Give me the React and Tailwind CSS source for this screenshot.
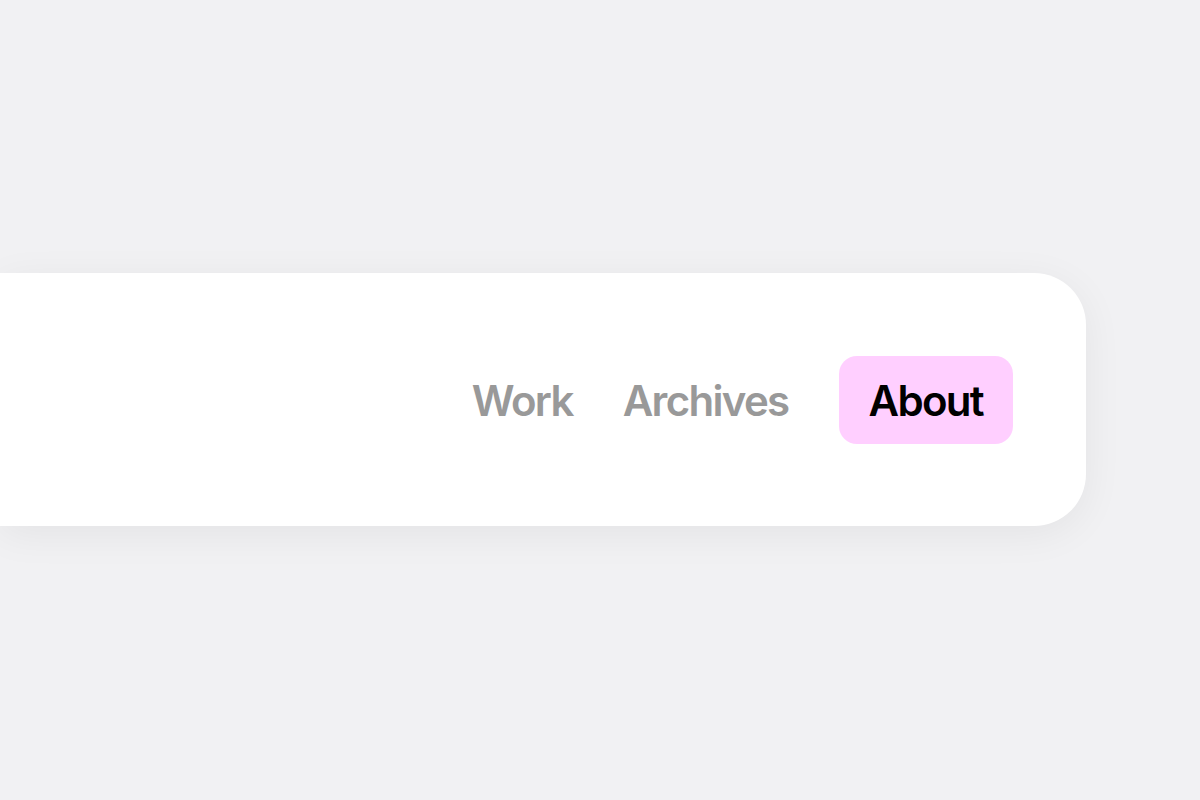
import React from 'react';

const LINKS = ['Work', 'Archives'];

export default function App() {
  return (
    <div className="min-h-screen w-full bg-[#f1f1f3] pt-[273px] overflow-hidden" style={{ fontFamily: 'Inter, "Liberation Sans", Arial, sans-serif' }}>
      <header className="w-[1086px] h-[253px] bg-white rounded-r-[52px] shadow-[0_8px_40px_rgba(0,0,0,0.06)] flex items-center justify-end pr-[73px]">
        <nav className="flex items-center gap-[50px]">
          {LINKS.map(l => (
            <a key={l} className="text-[42px] font-semibold tracking-[-0.04em] text-[#999999] leading-none pt-[3px]">
              {l}
            </a>
          ))}
          <a className="h-[88px] px-[30px] pt-[3px] flex items-center rounded-[18px] bg-[#ffcfff] text-[42px] font-semibold tracking-[-0.04em] text-black leading-none">
            About
          </a>
        </nav>
      </header>
    </div>
  );
}
